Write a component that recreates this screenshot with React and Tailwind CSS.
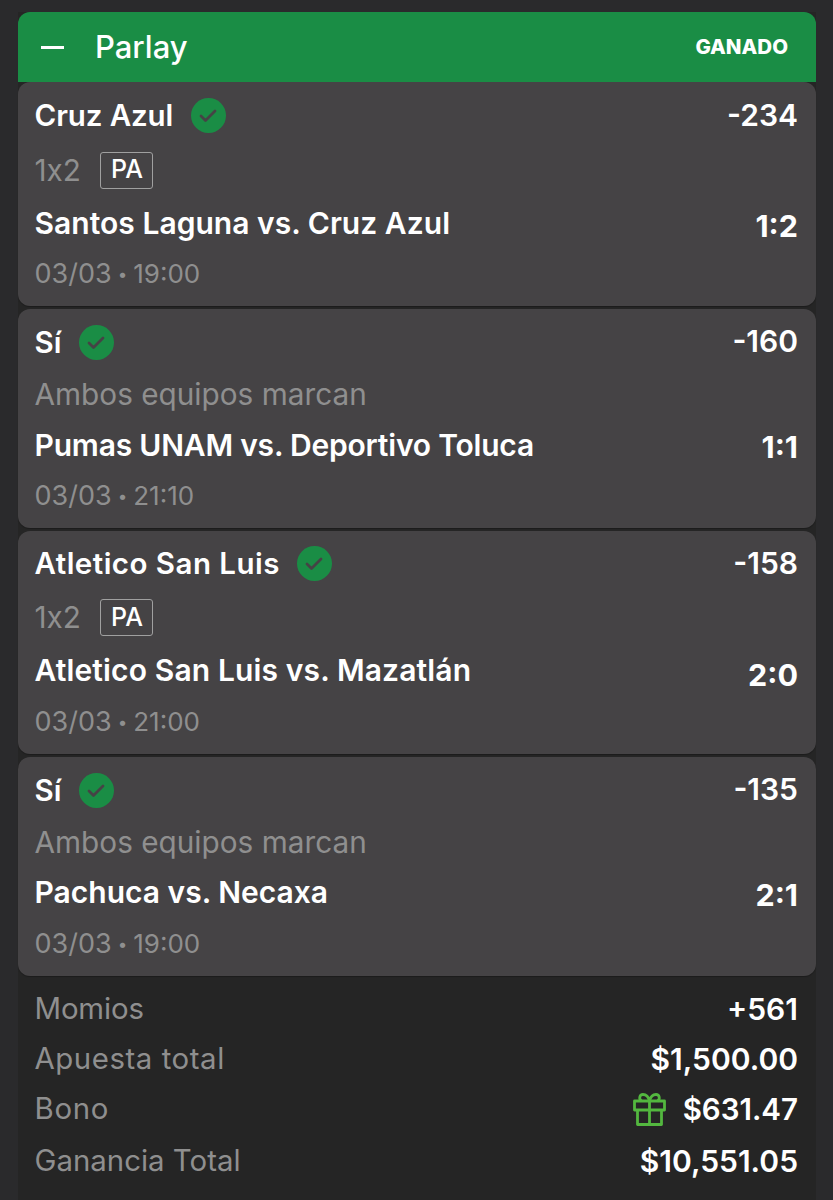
import React from 'react';

const bets = [
  { pick: 'Cruz Azul', pickTrack: 'tracking-[-0.1px]', odds: '-234', market: '1x2', pa: true, card: 'h-[224px]', title: 'h-[66px]', meta: 'h-[44px]', body: 'h-[65px] pt-[9px]', scoreGap: 'mt-[3px]', match: 'Santos Laguna vs. Cruz Azul', matchTrack: 'tracking-[0.03px]', score: '1:2', day: '03/03', time: '19:00' },
  { pick: 'Sí', odds: '-160', oddsGap: 'mb-[2px]', market: 'Ambos equipos marcan', card: 'h-[219px]', title: 'h-[66px]', meta: 'h-[39px]', body: 'h-[65px] pt-[9px]', scoreGap: 'mt-[2px]', match: 'Pumas UNAM vs. Deportivo Toluca', matchTrack: 'tracking-[-0.2px]', score: '1:1', day: '03/03', time: '21:10' },
  { pick: 'Atletico San Luis', pickTrack: 'tracking-[0.47px]', odds: '-158', market: '1x2', pa: true, card: 'h-[223px]', title: 'h-[64px]', meta: 'h-[45px]', body: 'h-[65px] pt-2', scoreGap: 'mt-[5px]', match: 'Atletico San Luis vs. Mazatlán', matchTrack: 'tracking-[0.13px]', score: '2:0', day: '03/03', time: '21:00' },
  { pick: 'Sí', odds: '-135', oddsGap: 'mb-[2px]', market: 'Ambos equipos marcan', card: 'h-[219px]', title: 'h-[66px]', meta: 'h-[39px]', body: 'h-[65px] pt-2', scoreGap: 'mt-[3px]', match: 'Pachuca vs. Necaxa', score: '2:1', day: '03/03', time: '19:00' },
];

const totals = [
  { label: 'Momios', labelTrack: 'tracking-[-0.15px]', value: '+561', valueSize: 'text-[30px]', row: 'h-[50px]' },
  { label: 'Apuesta total', labelTrack: 'tracking-[0.55px]', value: '$1,500.00', valueSize: 'text-[30px]', row: 'h-[50px]' },
  { label: 'Bono', labelTrack: 'tracking-[0.7px]', value: '$631.47', valueSize: 'text-[29.5px]', gift: true, row: 'h-[50px]' },
  { label: 'Ganancia Total', value: '$10,551.05', valueSize: 'text-[30px]', row: 'h-[54px]' },
];

const CheckBadge = () => (
  <svg width="35" height="35" viewBox="0 0 35 35" className="shrink-0">
    <circle cx="17.5" cy="17.5" r="17.5" fill="#1a8d45" />
    <path d="M10 18l4.500 4.500 9.500-9.500" fill="none" stroke="#454345" strokeWidth="2.8" strokeLinecap="round" strokeLinejoin="round" />
  </svg>
);

const GiftIcon = () => (
  <svg width="33" height="33" viewBox="0 0 33 33" fill="none" stroke="#53b73f" strokeWidth="2.8" strokeLinejoin="round" className="shrink-0">
    <rect x="1.500" y="8" width="30" height="9" />
    <path d="M4.500 17v14.500h24V17M16.500 8v23.500" />
    <path d="M16.500 8c-1-4-3.500-6.500-6.500-6.500-3.500 0-4.500 4.500-1.500 6.500M16.500 8c1-4 3.500-6.500 6.500-6.500 3.500 0 4.500 4.500 1.500 6.500" />
  </svg>
);

const BetCard = ({ bet }) => (
  <div className={`bg-[#454345] rounded-xl pl-[16.5px] pr-[18px] mb-[3px] shadow-[0_1px_1px_rgba(0,0,0,0.25)] ${bet.card}`}>
    <div className={`flex items-center justify-between ${bet.title}`}>
      <div className="flex items-center gap-[17.5px]">
        <span className={`text-[29.5px] font-semibold text-white ${bet.pickTrack || ''}`}>{bet.pick}</span>
        <CheckBadge />
      </div>
      <span className={`text-[30px] font-semibold text-white ${bet.oddsGap || ''}`}>{bet.odds}</span>
    </div>
    <div className={`flex items-center gap-[19.5px] ${bet.meta}`}>
      <span className="text-[29.75px] text-[#8f8f8f] [font-feature-settings:'calt'_0]">{bet.market}</span>
      {bet.pa && (
        <span className="flex items-center justify-center w-[53px] h-[37px] border border-[#a0a0a0] rounded-[3px] text-[25px] font-medium text-white">PA</span>
      )}
    </div>
    <div className={`flex justify-between ${bet.body}`}>
      <span className={`text-[30px] font-semibold text-white leading-[44px] ${bet.matchTrack || ''}`}>{bet.match}</span>
      <span className={`text-[30.5px] font-bold text-white leading-[44px] ${bet.scoreGap}`}>{bet.score}</span>
    </div>
    <div className="flex items-center gap-[6px] text-[#8f8f8f] leading-[34px]">
      <span className="text-[27px]">{bet.day}</span>
      <span className="text-[17px]">•</span>
      <span className="text-[26px]">{bet.time}</span>
    </div>
  </div>
);

export default function App() {
  return (
    <div className="bg-[#2a2a2c] h-[1200px] pt-3 pl-[18px] pr-[17px] font-['Inter','Liberation_Sans',sans-serif]">
      <div className="bg-[#252525] h-full">
        <div className="bg-[#1a8d45] rounded-t-xl h-[70px] flex items-center justify-between pl-[23px] pr-7">
          <div className="flex items-center gap-[31px]">
            <div className="w-[23px] h-[3px] bg-white" />
            <span className="text-[31px] font-medium text-white">Parlay</span>
          </div>
          <span className="text-[20.5px] font-extrabold text-white">GANADO</span>
        </div>
        {bets.map((bet, i) => (
          <BetCard key={i} bet={bet} />
        ))}
        <div className="pl-[16.5px] pr-[18px] pt-[5px]">
          {totals.map((t) => (
            <div key={t.label} className={`flex items-center justify-between ${t.row}`}>
              <span className={`text-[29.4px] text-[#8f8f8f] ${t.labelTrack || ''}`}>{t.label}</span>
              <div className="flex items-center gap-[17px]">
                {t.gift && <GiftIcon />}
                <span className={`font-semibold text-white ${t.valueSize}`}>{t.value}</span>
              </div>
            </div>
          ))}
        </div>
      </div>
    </div>
  );
}
